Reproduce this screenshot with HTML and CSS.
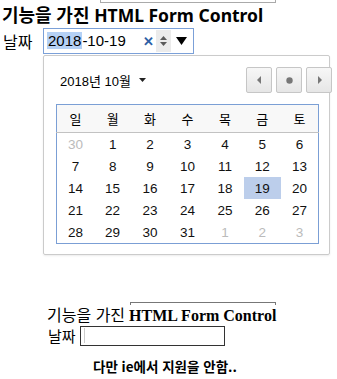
FILE: index.html
```html
<!DOCTYPE html>
<html lang="ko">
<head>
  <meta charset="UTF-8">
  <title>HTML Form Control</title>
  <link rel="stylesheet" href="styles.css">
</head>
<body>
  <div class="top-rule"></div>
  <h1 class="title">기능을 가진 <span class="latin">HTML Form Control</span></h1>

  <!-- Chrome date input -->
  <div class="date-row">
    <span class="date-label">날짜</span>
    <div class="date-input">
      <span class="date-text"><span class="sel">2018</span>-10-19</span>
      <span class="clear">&#x2715;</span>
      <span class="spin">
        <svg width="9" height="14" viewBox="0 0 9 14"><path d="M1 6 L4.5 2 L8 6 Z M1 8 L4.5 12 L8 8 Z" fill="#5a5a5a"/></svg>
      </span>
      <span class="drop">
        <svg width="11" height="8" viewBox="0 0 11 8"><path d="M0 0 L11 0 L5.5 8 Z" fill="#000"/></svg>
      </span>
    </div>
  </div>

  <!-- Calendar popup -->
  <div class="picker">
    <div class="picker-head">
      <span class="month">2018년 10월
        <svg width="7" height="4" viewBox="0 0 7 4"><path d="M0 0 L7 0 L3.5 4 Z" fill="#222"/></svg>
      </span>
      <div class="nav">
        <button class="nav-btn"><svg width="5" height="8" viewBox="0 0 5 8"><path d="M4 0 L4 8 L0 4 Z" fill="#777"/></svg></button>
        <button class="nav-btn"><svg width="7" height="7" viewBox="0 0 7 7"><circle cx="3.5" cy="3.5" r="3.2" fill="#777"/></svg></button>
        <button class="nav-btn"><svg width="5" height="8" viewBox="0 0 5 8"><path d="M1 0 L1 8 L5 4 Z" fill="#777"/></svg></button>
      </div>
    </div>
    <table class="cal">
      <thead>
        <tr><th>일</th><th>월</th><th>화</th><th>수</th><th>목</th><th>금</th><th>토</th></tr>
      </thead>
      <tbody>
        <tr><td class="other">30</td><td>1</td><td>2</td><td>3</td><td>4</td><td>5</td><td>6</td></tr>
        <tr><td>7</td><td>8</td><td>9</td><td>10</td><td>11</td><td>12</td><td>13</td></tr>
        <tr><td>14</td><td>15</td><td>16</td><td>17</td><td>18</td><td class="picked">19</td><td>20</td></tr>
        <tr><td>21</td><td>22</td><td>23</td><td>24</td><td>25</td><td>26</td><td>27</td></tr>
        <tr><td>28</td><td>29</td><td>30</td><td>31</td><td class="other">1</td><td class="other">2</td><td class="other">3</td></tr>
      </tbody>
    </table>
  </div>

  <!-- IE rendering -->
  <div class="legacy">
    <div class="legacy-rule"></div>
    <div class="legacy-title"><span class="ko">기능을 가진</span> <b>HTML Form Control</b></div>
    <div class="legacy-row">
      <span class="ko">날짜</span>
      <div class="legacy-input"><span class="caret"></span></div>
    </div>
    <p class="note">다만 ie에서 지원을 안함..</p>
  </div>
</body>
</html>
```

FILE: styles.css
```css
body {
  margin: 0;
  font-family: "Noto Sans", "Noto Sans CJK KR", sans-serif;
  color: #000;
  background: #fff;
}

.top-rule {
  margin-left: 100px;
  width: 174px;
  height: 2px;
  border: 1px solid #aaa;
  border-top: none;
}

.title {
  margin: 0;
  padding-left: 2px;
  font-size: 18px;
  line-height: 24px;
  font-weight: bold;
  white-space: nowrap;
}

.title .latin {
  font-size: 17.5px;
}

.date-row {
  display: flex;
  align-items: center;
  margin-top: 1px;
}

.date-label {
  margin-left: 3px;
  width: 40px;
  font-size: 16px;
}

.date-input {
  display: flex;
  align-items: center;
  box-sizing: border-box;
  width: 151px;
  height: 26px;
  border: 1px solid #7ba0d8;
  padding-left: 3px;
  font-family: "Liberation Sans", sans-serif;
  font-size: 15px;
}

.date-text {
  width: 96px;
  line-height: 18px;
}

.sel {
  background: #b5d1f5;
  padding: 0 1px;
}

.clear {
  width: 13px;
  color: #2e5fa6;
  font-size: 13px;
  font-weight: bold;
}

.spin {
  display: flex;
  align-items: center;
  justify-content: center;
  width: 15px;
  height: 22px;
  background: #ebebeb;
}

.drop {
  display: flex;
  margin-left: 5px;
}

.picker {
  box-sizing: border-box;
  margin-left: 43px;
  margin-top: 1px;
  width: 287px;
  height: 200px;
  border: 1px solid #cbcbcb;
  border-radius: 2px;
  box-shadow: 0 1px 2px rgba(0, 0, 0, 0.08);
  padding: 11px 0 0 12px;
  font-family: "Liberation Sans", "Noto Sans CJK KR", sans-serif;
  font-size: 13px;
}

.picker-head {
  display: flex;
  justify-content: space-between;
  align-items: center;
  width: 276px;
  height: 26px;
}

.month {
  display: flex;
  align-items: center;
  gap: 8px;
  margin-left: 4px;
  font-size: 13px;
}

.nav {
  display: flex;
  gap: 4px;
}

.nav-btn {
  display: flex;
  align-items: center;
  justify-content: center;
  box-sizing: border-box;
  width: 26px;
  height: 26px;
  padding: 0;
  border: 1px solid #c6c6c6;
  border-radius: 2px;
  background: linear-gradient(#f7f7f7, #e6e6e6);
}

.cal {
  margin-top: 11px;
  width: 263px;
  border-collapse: collapse;
  border: 1px solid #7b9fd5;
  table-layout: fixed;
}

.cal th {
  height: 27px;
  padding: 0;
  font-weight: normal;
  font-family: "Noto Sans CJK KR", sans-serif;
  font-size: 13px;
  background: #f8f8f8;
  border-bottom: 1px solid #c2c2c2;
}

.cal td {
  height: 22px;
  padding: 0;
  text-align: center;
  font-size: 13.5px;
  color: #111;
}

.cal td.other {
  color: #bbb;
}

.cal td.picked {
  background: #bcceeb;
}

.legacy {
  margin-top: 47px;
}

.legacy-rule {
  margin-left: 130px;
  width: 144px;
  height: 2px;
  border: 1px solid #777;
  border-bottom: none;
}

.ko {
  font-family: "Noto Sans CJK KR", sans-serif;
}

.legacy-title {
  padding-left: 47px;
  font-family: "Liberation Serif", serif;
  font-size: 16px;
  line-height: 18px;
  white-space: nowrap;
}

.legacy-row {
  display: flex;
  align-items: center;
  gap: 4px;
  padding-left: 48px;
  font-size: 15px;
}

.legacy-input {
  display: flex;
  align-items: center;
  box-sizing: border-box;
  width: 145px;
  height: 20px;
  border: 1px solid #333;
  padding-left: 3px;
}

.caret {
  width: 1px;
  height: 15px;
  background: #ccc;
}

.note {
  margin: 12px 0 0;
  padding-left: 93px;
  font-family: "Noto Sans CJK KR", sans-serif;
  font-size: 13.5px;
  font-weight: bold;
  line-height: 16px;
}
```
